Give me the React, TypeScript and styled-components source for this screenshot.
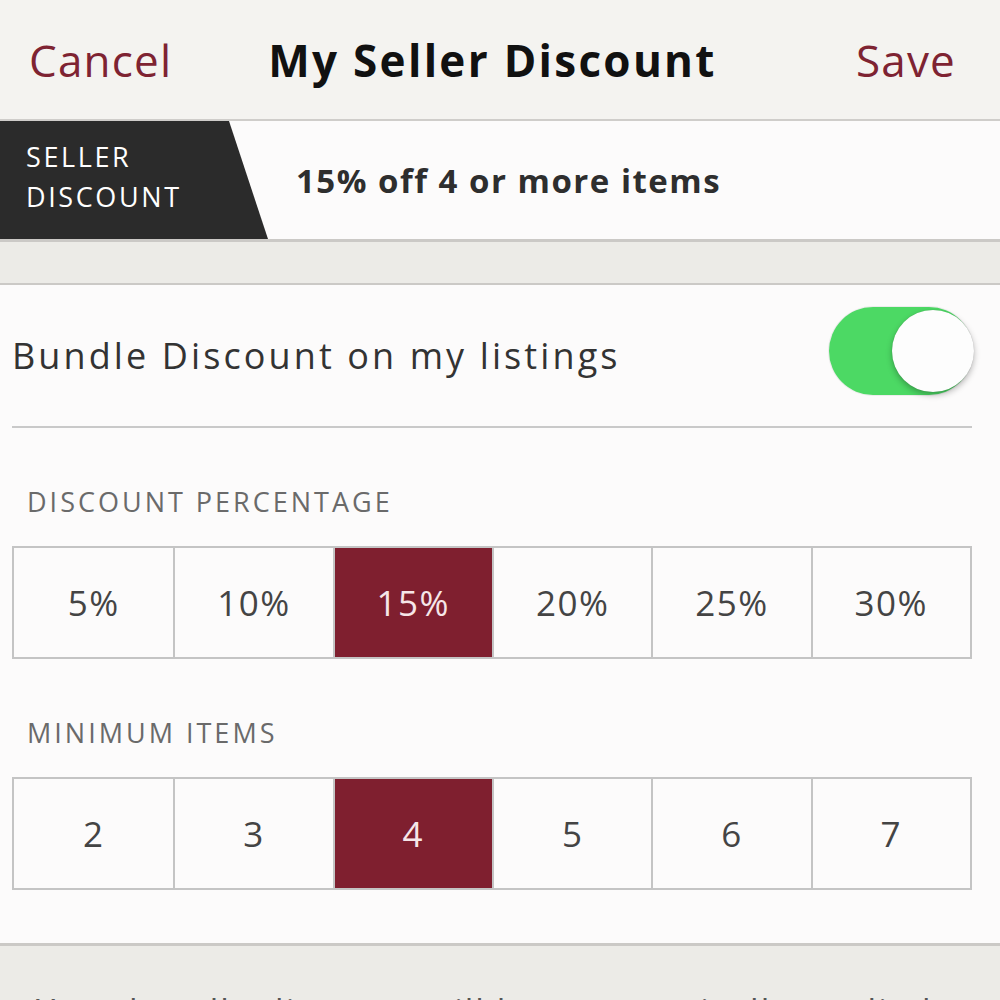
import styled, { createGlobalStyle } from "styled-components";

const GlobalStyle = createGlobalStyle`
  html, body {
    margin: 0;
    padding: 0;
    background: #ecebe7;
  }
  body {
    font-family: "Open Sans", Lato, "Liberation Sans", sans-serif;
    overflow: hidden;
  }
`;

const Page = styled.div`
  width: 1000px;
  height: 1000px;
  overflow: hidden;
  display: flex;
  flex-direction: column;
  background: #ecebe7;
`;

const NavBar = styled.header`
  height: 121px;
  flex-shrink: 0;
  background: #f4f3f0;
  border-bottom: 2px solid #cfcdca;
  display: grid;
  grid-template-columns: 1fr auto 1fr;
  align-items: center;
  padding: 0 44px 0 29px;
  box-sizing: border-box;
`;

const NavButton = styled.button<{ $end?: boolean }>`
  justify-self: ${(p) => (p.$end ? "end" : "start")};
  border: none;
  background: none;
  padding: 0;
  font-family: inherit;
  font-size: 44px;
  color: #7e2332;
  letter-spacing: 1.2px;
`;

const NavTitle = styled.h1`
  margin: 0;
  font-size: 44px;
  font-weight: 700;
  color: #111;
  letter-spacing: 2.3px;
`;

const Banner = styled.div`
  height: 118px;
  flex-shrink: 0;
  display: flex;
  align-items: center;
  background: #fcfbfb;
  border-bottom: 3px solid #cbc9c6;
`;

const Badge = styled.div`
  width: 268px;
  height: 100%;
  background: #2b2b2b;
  clip-path: polygon(0 0, 229px 0, 268px 100%, 0 100%);
  color: #fff;
  font-size: 27px;
  line-height: 40px;
  padding: 16px 0 0 26px;
  box-sizing: border-box;
  letter-spacing: 2.6px;
`;

const BannerText = styled.div`
  margin-left: 28px;
  font-size: 33px;
  font-weight: 700;
  color: #2e2e2e;
  letter-spacing: 1.5px;
`;

const Spacer = styled.div`
  height: 41px;
  flex-shrink: 0;
  background: #ecebe7;
  border-bottom: 2px solid #cbc9c6;
`;

const Card = styled.section`
  flex-shrink: 0;
  background: #fcfbfb;
  padding: 0 28px 0 12px;
  border-bottom: 3px solid #cbc9c6;
  height: 661px;
  box-sizing: border-box;
`;

const ToggleRow = styled.div`
  height: 143px;
  display: flex;
  align-items: center;
  justify-content: space-between;
  border-bottom: 2px solid #c9c9c9;
  box-sizing: border-box;
`;

const ToggleLabel = styled.span`
  font-size: 36px;
  color: #333;
  letter-spacing: 3.1px;
`;

const Switch = styled.div<{ $on: boolean }>`
  width: 144px;
  height: 88px;
  border-radius: 44px;
  background: ${(p) => (p.$on ? "#4cd964" : "#e5e5e5")};
  display: flex;
  align-items: center;
  justify-content: ${(p) => (p.$on ? "flex-end" : "flex-start")};
  margin-right: -1px;
  margin-bottom: 9px;
  box-shadow: 0 0 0 1px rgba(0, 0, 0, 0.06);
`;

const Knob = styled.div`
  width: 82px;
  height: 82px;
  border-radius: 50%;
  background: #fdfdfd;
  margin: 0 -1px;
  box-shadow: 0 3px 6px rgba(0, 0, 0, 0.28), 0 0 1px rgba(0, 0, 0, 0.2);
`;

const SectionLabel = styled.div`
  font-size: 27px;
  color: #6a6a6a;
  padding-left: 15px;
  height: 118px;
  line-height: 36px;
  padding-top: 56px;
  letter-spacing: 3px;
  box-sizing: border-box;
`;

const SegmentGroup = styled.div`
  display: grid;
  grid-template-columns: repeat(6, 1fr);
  border: 2px solid #c4c4c4;
  width: 960px;
  height: 113px;
  box-sizing: border-box;
`;

const Segment = styled.div<{ $active: boolean }>`
  display: flex;
  align-items: center;
  justify-content: center;
  font-size: 35px;
  letter-spacing: 1.5px;
  color: ${(p) => (p.$active ? "#f6e6e8" : "#444")};
  background: ${(p) => (p.$active ? "#7f1f2f" : "transparent")};
  & + & {
    border-left: 2px solid #c4c4c4;
  }
`;

const Footer = styled.div`
  padding: 42px 36px 0;
  font-size: 34px;
  color: #555;
  letter-spacing: 2px;
  white-space: nowrap;
`;

const percentages = ["5%", "10%", "15%", "20%", "25%", "30%"];
const minimums = ["2", "3", "4", "5", "6", "7"];

export default function App() {
  return (
    <Page>
      <GlobalStyle />
      <NavBar>
        <NavButton>Cancel</NavButton>
        <NavTitle>My Seller Discount</NavTitle>
        <NavButton $end>Save</NavButton>
      </NavBar>
      <Banner>
        <Badge>
          SELLER
          <br />
          DISCOUNT
        </Badge>
        <BannerText>15% off 4 or more items</BannerText>
      </Banner>
      <Spacer />
      <Card>
        <ToggleRow>
          <ToggleLabel>Bundle Discount on my listings</ToggleLabel>
          <Switch $on>
            <Knob />
          </Switch>
        </ToggleRow>
        <SectionLabel>DISCOUNT PERCENTAGE</SectionLabel>
        <SegmentGroup>
          {percentages.map((p) => (
            <Segment key={p} $active={p === "15%"}>
              {p}
            </Segment>
          ))}
        </SegmentGroup>
        <SectionLabel>MINIMUM ITEMS</SectionLabel>
        <SegmentGroup>
          {minimums.map((m) => (
            <Segment key={m} $active={m === "4"}>
              {m}
            </Segment>
          ))}
        </SegmentGroup>
      </Card>
      <Footer>Your bundle discount will be automatically applied</Footer>
    </Page>
  );
}
